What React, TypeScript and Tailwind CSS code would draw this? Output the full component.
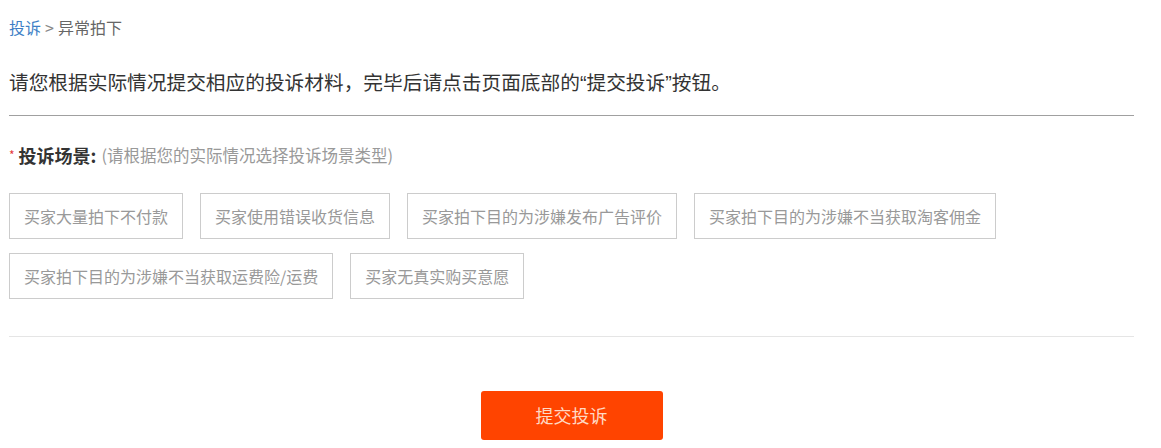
const scenes = [
  ["买家大量拍下不付款", "买家使用错误收货信息", "买家拍下目的为涉嫌发布广告评价", "买家拍下目的为涉嫌不当获取淘客佣金"],
  ["买家拍下目的为涉嫌不当获取运费险/运费", "买家无真实购买意愿"],
];

const SceneButton = ({ label }: { label: string }) => (
  <div className="h-[46px] px-[14px] flex items-center border border-[#cccccc] bg-white text-[16px] text-[#999999] whitespace-nowrap">
    {label}
  </div>
);

export default function App() {
  return (
    <div
      className="w-[1161px] h-[448px] bg-white pl-[9px] pr-[27px] overflow-hidden"
      style={{ fontFamily: '"Noto Sans CJK SC", "Noto Sans", sans-serif' }}
    >
      <div className="pt-[17px] h-[37px] leading-[20px] text-[16px] text-[#666666]">
        <span className="text-[#3d7fc6]">投诉</span>
        <span className="mx-[4px] text-[#888888]">&gt;</span>
        <span>异常拍下</span>
      </div>
      <div
        className="mt-[31px] leading-[30px] text-[19.7px] text-[#333333]"
        style={{ fontFamily: '"Liberation Sans", "Noto Sans CJK SC", sans-serif' }}
      >
        请您根据实际情况提交相应的投诉材料，完毕后请点击页面底部的“提交投诉”按钮。
      </div>
      <div className="mt-[17px] border-t border-[#a0a0a0]" />
      <div className="mt-[27px] h-[24px] flex items-center">
        <span className="text-[#e4393c] text-[12px] mr-[4px]">*</span>
        <span className="text-[18px] font-bold text-[#333333]">投诉场景:</span>
        <span className="ml-[5px] text-[16.5px] text-[#999999]">(请根据您的实际情况选择投诉场景类型)</span>
      </div>
      <div className="mt-[26px] flex flex-col gap-[14px]">
        {scenes.map((row, i) => (
          <div key={i} className="flex gap-[17px]">
            {row.map((s) => (
              <SceneButton key={s} label={s} />
            ))}
          </div>
        ))}
      </div>
      <div className="mt-[37px] border-t border-[#e5e5e5]" />
      <div className="mt-[54px] flex justify-center">
        <button className="w-[182px] h-[49px] rounded-[3px] bg-[#ff4400] text-[18px] text-[#ffd9c4]">
          提交投诉
        </button>
      </div>
    </div>
  );
}
